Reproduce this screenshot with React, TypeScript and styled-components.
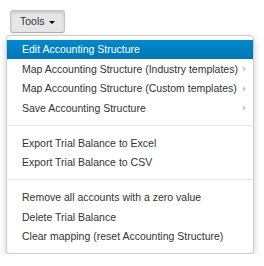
import React from 'react';
import styled, { createGlobalStyle } from 'styled-components';

const GlobalStyle = createGlobalStyle`
  body {
    margin: 0;
    background: #fff;
    font-family: "Liberation Sans", Arial, sans-serif;
    font-size: 10.5px;
    color: #333;
  }
`;

type Entry = { label: string; sub?: boolean; active?: boolean } | 'divider';

const entries: Entry[] = [
  { label: 'Edit Accounting Structure', active: true },
  { label: 'Map Accounting Structure (Industry templates)', sub: true },
  { label: 'Map Accounting Structure (Custom templates)', sub: true },
  { label: 'Save Accounting Structure', sub: true },
  'divider',
  { label: 'Export Trial Balance to Excel' },
  { label: 'Export Trial Balance to CSV' },
  'divider',
  { label: 'Remove all accounts with a zero value' },
  { label: 'Delete Trial Balance' },
  { label: 'Clear mapping (reset Accounting Structure)' },
];

const Page = styled.div`
  display: flex;
  flex-direction: column;
  align-items: flex-start;
  padding: 10px 0 0 6px;
`;

const ToolsButton = styled.button`
  display: flex;
  align-items: center;
  gap: 4px;
  margin-left: 4px;
  padding: 3px 9px;
  height: 23px;
  font-family: inherit;
  font-size: 10.5px;
  line-height: 15px;
  color: #333;
  background: #e6e6e6;
  border: 1px solid #c5c5c5;
  border-bottom-color: #b3b3b3;
  border-radius: 3px;
  box-shadow: inset 0 1.5px 3px rgba(0, 0, 0, 0.15), 0 1px 2px rgba(0, 0, 0, 0.05);
  cursor: pointer;
`;

const Caret = styled.span`
  width: 0;
  height: 0;
  margin-top: 1px;
  border-top: 3px solid #000;
  border-left: 3px solid transparent;
  border-right: 3px solid transparent;
`;

const Menu = styled.ul`
  list-style: none;
  margin: 2px 0 0;
  padding: 3.75px 0 7px;
  width: 248px;
  box-sizing: border-box;
  background: #fff;
  border: 1px solid rgba(0, 0, 0, 0.2);
  border-radius: 4.5px;
  box-shadow: 0 3.75px 7.5px rgba(0, 0, 0, 0.2);
`;

const Item = styled.li<{ $active?: boolean }>`
  display: flex;
  align-items: center;
  justify-content: space-between;
  padding: 2.25px 15px;
  line-height: 15px;
  white-space: nowrap;
  color: ${(p) => (p.$active ? '#fff' : '#333')};
  background: ${(p) =>
    p.$active ? 'linear-gradient(to bottom, #0088cc, #0077b3)' : 'transparent'};
  cursor: pointer;
`;

const SubCaret = styled.span`
  width: 0;
  height: 0;
  margin-right: -7.5px;
  border-left: 3.75px solid #ccc;
  border-top: 3.75px solid transparent;
  border-bottom: 3.75px solid transparent;
`;

const Divider = styled.li`
  height: 1px;
  margin: 6.75px 1px;
  background: #e5e5e5;
  border-bottom: 1px solid #fff;
`;

export default function App() {
  return (
    <>
      <GlobalStyle />
      <Page>
        <ToolsButton>
          Tools
          <Caret />
        </ToolsButton>
        <Menu>
          {entries.map((e, i) =>
            e === 'divider' ? (
              <Divider key={i} />
            ) : (
              <Item key={i} $active={e.active}>
                {e.label}
                {e.sub && <SubCaret />}
              </Item>
            )
          )}
        </Menu>
      </Page>
    </>
  );
}
